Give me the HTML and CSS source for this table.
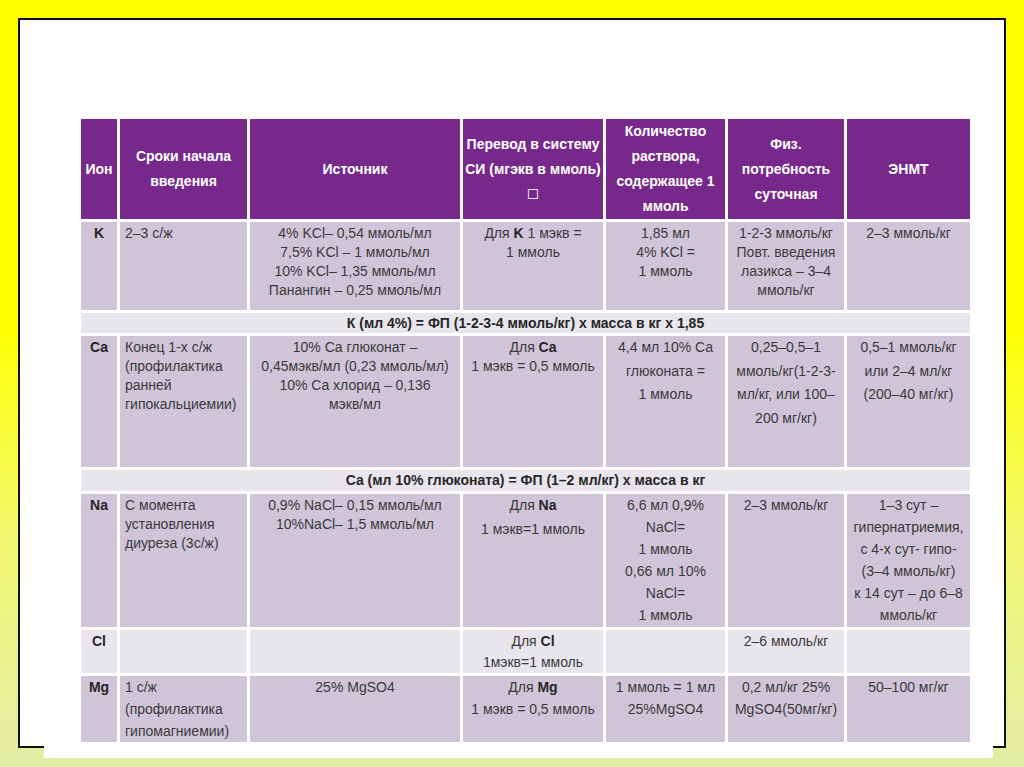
FILE: index.html
```html
<!DOCTYPE html>
<html lang="ru">
<head>
<meta charset="utf-8">
<title>Электролиты</title>
<link rel="stylesheet" href="styles.css">
</head>
<body>
<div class="frame">
  <div class="sheet">
    <table class="grid">
      <colgroup>
        <col class="c1"><col class="c2"><col class="c3"><col class="c4"><col class="c5"><col class="c6"><col class="c7">
      </colgroup>
      <tr class="r-head">
        <th>Ион</th>
        <th>Сроки начала<br>введения</th>
        <th>Источник</th>
        <th>Перевод в систему<br>СИ (мгэкв в ммоль)<br><span class="box">☐</span></th>
        <th>Количество<br>раствора,<br>содержащее 1<br>ммоль</th>
        <th>Физ.<br>потребность<br>суточная</th>
        <th>ЭНМТ</th>
      </tr>
      <tr class="dark r-k">
        <td class="ion">K</td>
        <td class="left">2–3 с/ж</td>
        <td>4% KCl– 0,54 ммоль/мл<br>7,5% KCl – 1 ммоль/мл<br>10% KCl– 1,35 ммоль/мл<br>Панангин – 0,25 ммоль/мл</td>
        <td>Для <b>K</b> 1 мэкв =<br>1 ммоль</td>
        <td>1,85 мл<br>4% KCl =<br>1 ммоль</td>
        <td>1-2-3 ммоль/кг<br>Повт. введения<br>лазикса – 3–4<br>ммоль/кг</td>
        <td>2–3 ммоль/кг</td>
      </tr>
      <tr class="light r-f1">
        <td colspan="7" class="formula">К (мл 4%) = ФП (1-2-3-4 ммоль/кг) х масса в кг х 1,85</td>
      </tr>
      <tr class="dark r-ca">
        <td class="ion">Ca</td>
        <td class="left">Конец 1-х с/ж<br>(профилактика<br>ранней<br>гипокальциемии)</td>
        <td>10% Ca глюконат –<br>0,45мэкв/мл (0,23 ммоль/мл)<br>10% Ca хлорид – 0,136<br>мэкв/мл</td>
        <td>Для <b>Ca</b><br>1 мэкв = 0,5 ммоль</td>
        <td class="loose">4,4 мл 10% Ca<br>глюконата =<br>1 ммоль</td>
        <td class="loose">0,25–0,5–1<br>ммоль/кг(1-2-3-<br>мл/кг, или 100–<br>200 мг/кг)</td>
        <td class="loose">0,5–1 ммоль/кг<br>или 2–4 мл/кг<br>(200–40 мг/кг)</td>
      </tr>
      <tr class="light r-f2">
        <td colspan="7" class="formula">Ca (мл 10% глюконата) = ФП (1–2 мл/кг) х масса в кг</td>
      </tr>
      <tr class="dark r-na">
        <td class="ion">Na</td>
        <td class="left">С момента<br>установления<br>диуреза (3с/ж)</td>
        <td>0,9% NaCl– 0,15 ммоль/мл<br>10%NaCl– 1,5 ммоль/мл</td>
        <td class="loose">Для <b>Na</b><br>1 мэкв=1 ммоль</td>
        <td class="mid">6,6 мл 0,9%<br>NaCl=<br>1 ммоль<br>0,66 мл 10%<br>NaCl=<br>1 ммоль</td>
        <td class="loose">2–3 ммоль/кг</td>
        <td class="mid">1–3 сут –<br>гипернатриемия,<br>с 4-х сут- гипо-<br>(3–4 ммоль/кг)<br>к 14 сут – до 6–8<br>ммоль/кг</td>
      </tr>
      <tr class="light r-cl">
        <td class="ion">Cl</td>
        <td class="left"></td>
        <td></td>
        <td class="loose">Для <b>Cl</b><br>1мэкв=1 ммоль</td>
        <td></td>
        <td class="loose">2–6 ммоль/кг</td>
        <td></td>
      </tr>
      <tr class="dark r-mg">
        <td class="ion">Mg</td>
        <td class="left loose">1 с/ж<br>(профилактика<br>гипомагниемии)</td>
        <td class="loose">25% MgSO4</td>
        <td class="loose">Для <b>Mg</b><br>1 мэкв = 0,5 ммоль</td>
        <td class="loose">1 ммоль = 1 мл<br>25%MgSO4</td>
        <td class="loose">0,2 мл/кг 25%<br>MgSO4(50мг/кг)</td>
        <td class="loose">50–100 мг/кг</td>
      </tr>
    </table>
  </div>
</div>
</body>
</html>
```
FILE: styles.css
```css
html, body {
  margin: 0;
  padding: 0;
}
body {
  width: 1024px;
  height: 767px;
  box-sizing: border-box;
  padding: 18px 0 0 18px;
  background: linear-gradient(180deg, #ffff00 0%, #ffff00 42%, #f2f870 70%, #e2eca6 100%);
  font-family: "Liberation Sans", Arial, sans-serif;
  overflow: hidden;
}
.frame {
  position: relative;
  width: 988px;
  height: 730px;
  box-sizing: border-box;
  background: #ffffff;
  border: 2px solid #111111;
}
.sheet {
  position: absolute;
  left: 24px;
  right: 11px;
  top: 0;
  bottom: -12px;
  background: #ffffff;
  padding: 96px 0 0 34px;
  box-sizing: border-box;
}
.grid {
  width: 895px;
  table-layout: fixed;
  border-collapse: separate;
  border-spacing: 3px;
  font-size: 14px;
  color: #3a3a3a;
}
.c1 { width: 36px; }
.c2 { width: 127px; }
.c3 { width: 210px; }
.c4 { width: 140px; }
.c5 { width: 119px; }
.c6 { width: 116px; }
.c7 { width: 123px; }

.grid th {
  background: #76298a;
  color: #ffffff;
  font-weight: bold;
  font-size: 14px;
  line-height: 25px;
  padding: 0 2px;
  vertical-align: middle;
  text-align: center;
  white-space: nowrap;
}
.box {
  font-family: "DejaVu Sans", sans-serif;
  font-weight: normal;
  font-size: 14px;
}
.grid td {
  padding: 2px 3px 0;
  line-height: 19px;
  vertical-align: top;
  text-align: center;
  white-space: nowrap;
  overflow: visible;
}
.grid td.loose {
  line-height: 23.5px;
  padding-top: 0;
}
.grid td.mid {
  line-height: 22px;
  padding-top: 0;
}
.r-cl td.loose {
  line-height: 21px;
  padding-top: 1px;
}
.r-mg td.loose {
  line-height: 22px;
  padding-top: 0;
}
.grid td.left {
  text-align: left;
  padding-left: 5px;
}
.grid td.ion {
  font-weight: bold;
  color: #262626;
}
.grid td.formula {
  font-weight: bold;
  color: #262626;
  padding: 0;
  line-height: 19px;
  vertical-align: middle;
}
.grid td b {
  color: #262626;
}
.dark td { background: #d0c5d8; }
.light td { background: #e9e5ec; }

.r-head { height: 100px; }
.r-k { height: 88px; }
.r-f1 { height: 20px; }
.r-ca { height: 131px; }
.r-f2 { height: 21px; }
.r-na { height: 133px; }
.r-cl { height: 43px; }
.r-mg { height: 66px; }
```
